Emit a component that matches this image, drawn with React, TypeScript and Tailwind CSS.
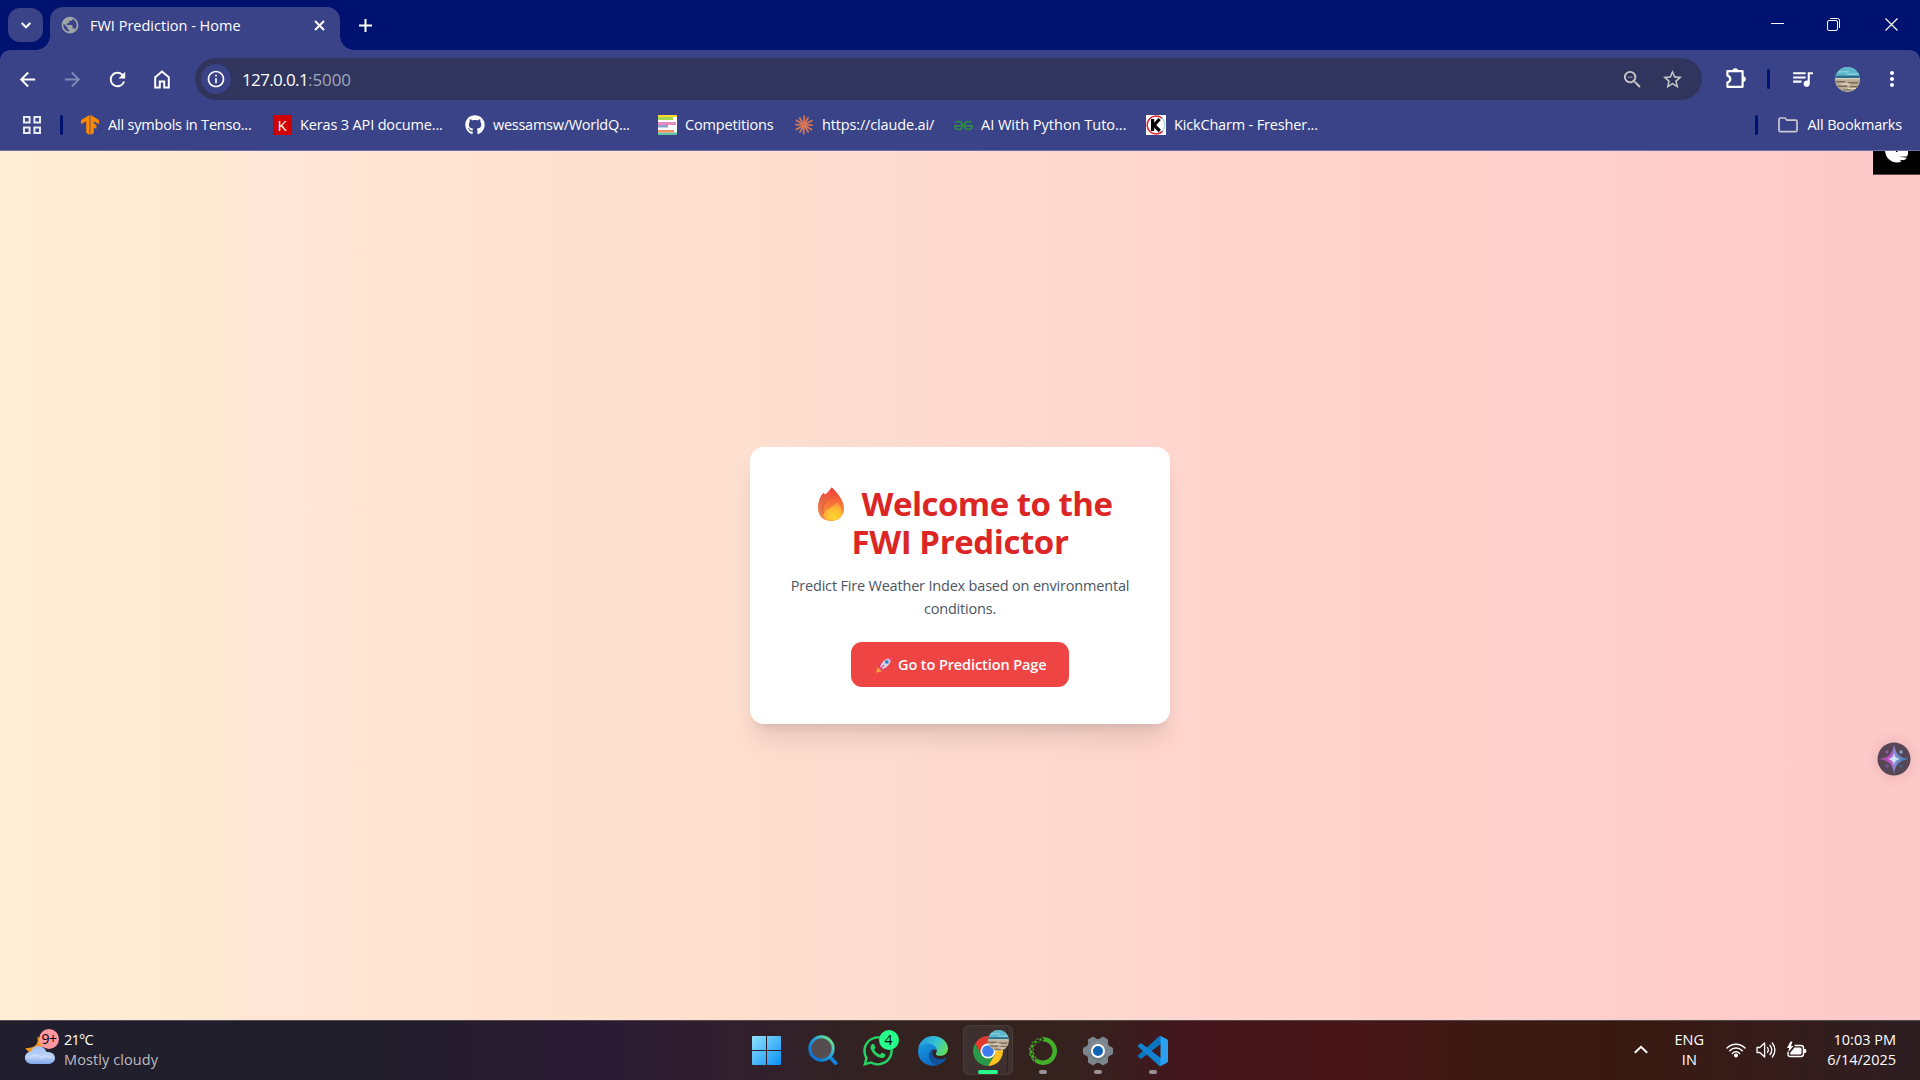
import React from 'react';
import type { ReactNode } from 'react';
import {
  MdArrowBack,
  MdArrowForward,
  MdInfoOutline,
  MdMoreVert,
  MdPublic,
  MdQueueMusic,
  MdRefresh,
  MdStarBorder,
  MdZoomOut,
} from 'react-icons/md';
import { FaGithub, FaWhatsapp } from 'react-icons/fa';
import { SiAnaconda, SiGeeksforgeeks, SiTensorflow } from 'react-icons/si';

/* ---------- browser icons ---------- */

function HomeIcon() {
  return (
    <svg width="16" height="19" viewBox="0 0 16 19" fill="none" stroke="#fff" strokeWidth="2">
      <path d="M1.2 7.2 8 1.6l6.8 5.6V17.6H10.2V11.6H5.8v6H1.2z" />
    </svg>
  );
}

function PuzzleIcon() {
  return (
    <svg width="22" height="22" viewBox="0 0 22 22" fill="none">
      <path
        d="M3.2 3.2H17.6V18.8H2.4V14.6C6.2 13.6 6.2 8.6 2.4 7.6V3.2z"
        stroke="#fff"
        strokeWidth="2.2"
        strokeLinejoin="round"
      />
      <path d="M7.6 3a2.7 2.4 0 0 1 5.4 0zM18 8.4a2.6 2.6 0 0 1 0 5.2z" fill="#fff" stroke="#fff" strokeWidth=".6" />
    </svg>
  );
}

function GridIcon() {
  return (
    <svg width="18" height="18" viewBox="0 0 18 18" fill="none" stroke="#e8eaf4" strokeWidth="2">
      <path d="M1 1h5.6v5.6H1zM11.4 1H17v5.6h-5.6zM1 11.4h5.6V17H1zM11.4 11.4H17V17h-5.6z" />
    </svg>
  );
}

function FolderIcon() {
  return (
    <svg width="20" height="16" viewBox="0 0 20 16" fill="none" stroke="#c9cad2" strokeWidth="1.7">
      <path d="M1 2.4Q1 1 2.4 1H7l2 2.2h8.6Q19 3.2 19 4.6v8.6q0 1.4-1.4 1.4H2.4Q1 14.6 1 13.2z" />
    </svg>
  );
}

function AvatarIcon({ size }: { size: number }) {
  return (
    <svg width={size} height={size} viewBox="0 0 25 25">
      <defs>
        <clipPath id={`avatar${size}`}>
          <circle cx="12.5" cy="12.5" r="12.5" />
        </clipPath>
      </defs>
      <g clipPath={`url(#avatar${size})`}>
        <rect width="25" height="25" fill="#b9ad97" />
        <rect width="25" height="9" fill="#5cb6cd" />
        <path d="M3 4h11v1.5H3zM12 6.5h12V8H12z" fill="#86cfde" />
        <rect y="8.6" width="25" height="3" fill="#2c6f8c" />
        <rect y="11" width="25" height="1.3" fill="#d9d0be" />
        <path d="M1 14h9v1.400H1zM13 15h10v1.400H13zM3 18.600h9V20H3zM15 19h7v1.200h-7zM8 22.400h8v1.200H8z" fill="#7d6952" />
        <path d="M6 16.500h9v1.200H6zM13 21h8v1H13z" fill="#e2dac9" />
      </g>
    </svg>
  );
}

/* ---------- bookmark icons ---------- */

function KerasIcon() {
  return (
    <div className="flex h-5 w-[19px] items-center justify-center bg-[#d00000] text-[15px] leading-none text-white">
      K
    </div>
  );
}

function CompetitionsIcon() {
  return (
    <svg width="19" height="20" viewBox="0 0 19 20">
      <rect width="19" height="20" fill="#fff" />
      <rect width="19" height="2" fill="#ffd92f" />
      <rect y="2" width="15" height="3" fill="#a6d854" />
      <rect y="7" width="18" height="3" fill="#e78ac3" />
      <rect y="10" width="10" height="2.5" fill="#8da0cb" />
      <rect y="15" width="16" height="2.5" fill="#fc8d62" />
      <rect y="17.5" width="19" height="2.5" fill="#66c2a5" />
    </svg>
  );
}

const rays = [0, 31, 58, 92, 120, 150, 182, 212, 238, 272, 300, 331];

function ClaudeIcon() {
  return (
    <svg width="20" height="20" viewBox="-10 -10 20 20" stroke="#d97757" strokeWidth="1.7">
      {rays.map((a, i) => (
        <path key={a} d={i % 2 ? 'M0 0H9.6' : 'M0 0H8.8'} transform={`rotate(${a})`} />
      ))}
    </svg>
  );
}

function KickIcon() {
  return (
    <svg width="20" height="20" viewBox="0 0 20 20" fill="none">
      <rect width="20" height="20" fill="#fff" />
      <path d="M15.5 3A9 9 0 0 1 16 16.5" stroke="#a9d3e6" strokeWidth="1.2" />
      <path d="M16 3.2A9 9 0 1 0 16.5 16.4" stroke="#e0202c" strokeWidth="1.5" />
      <path d="M6.6 4v12M13.6 4 8 10.2 13.8 16" stroke="#000" strokeWidth="3.2" />
    </svg>
  );
}

/* ---------- page artwork ---------- */

function FireIcon() {
  return (
    <svg width="26" height="34" viewBox="0 0 26 34">
      <defs>
        <linearGradient id="fireBody" x1=".6" y1="0" x2=".5" y2="1">
          <stop offset="0" stopColor="#ee3a3c" />
          <stop offset=".5" stopColor="#f8743b" />
          <stop offset="1" stopColor="#fb9a3c" />
        </linearGradient>
        <linearGradient id="fireSide" x1="0" y1="0" x2="0" y2="1">
          <stop offset="0" stopColor="#e5573c" />
          <stop offset="1" stopColor="#ee8e52" />
        </linearGradient>
        <radialGradient id="fireCore" cx=".55" cy=".8" r=".75">
          <stop offset="0" stopColor="#ffd72e" />
          <stop offset=".6" stopColor="#fdb833" />
          <stop offset="1" stopColor="#f98c38" />
        </radialGradient>
      </defs>
      <path
        d="M13.6.2C19 5.5 26 13 26 21.6 26 29 20.5 34 13.2 34 5.6 34 .2 29 .2 21.5.2 15 2 9 5.6 6c.6 1.2 1.2 1.5 2 1.2C9.5 5.5 12 3 13.6.2z"
        fill="url(#fireBody)"
      />
      <path d="M5.6 6C2 9 .2 15 .2 21.5c0 5.5 3 9.5 7 11.4C2.5 26 4 15.5 11.5 9.5L8.5 11c.8-2.2.4-3.4-.6-4.1-.9.5-1.7.3-2.3-.9z" fill="url(#fireSide)" />
      <path d="M13 9.5C7 14 3.5 20 5 27" fill="none" stroke="#d9503a" strokeWidth=".9" />
      <path d="M19 15c4 4 6 8.5 5 12.5C22.5 32 18 33.5 13.5 33.5 8.5 33.5 5.5 30.5 6 27c.8-5.5 9-6.5 13-12z" fill="url(#fireCore)" />
    </svg>
  );
}

function RocketIcon() {
  return (
    <svg width="16" height="16" viewBox="0 0 16 16">
      <path d="M1 11.5 4 10l2.5 2.5L5 14.5.3 15.7z" fill="#f9a13a" />
      <path d="M2.6 8.5 6 5.2l2 .6-4 5zM7.6 13.6 11 10l-.6-2-5 4z" fill="#e0316f" />
      <path d="M4 9.5C6 5 9 1.5 15.2.8 15 6.5 11.5 10 6.8 12.2z" fill="#d3d9ec" />
      <path d="M12 1.5 15.2.8 14.6 4z" fill="#ee3d6d" />
      <path d="M3.5 9.8 6.5 12.6 5 13.2 3 11z" fill="#c43472" />
      <circle cx="10.8" cy="4.9" r="1.9" fill="#3f7fd0" />
      <path d="M4.5 11.5 8 8" stroke="#f04d7d" strokeWidth="1.2" />
    </svg>
  );
}

function SparkleOrb() {
  return (
    <svg width="34" height="34" viewBox="-17 -17 34 34">
      <defs>
        <linearGradient id="orbLeft" x1="0" x2="1">
          <stop offset="0" stopColor="#94588f" />
          <stop offset=".35" stopColor="#c64fc4" />
          <stop offset=".55" stopColor="#7d8fd0" />
          <stop offset="1" stopColor="#3b78b0" />
        </linearGradient>
      </defs>
      <circle r="16.5" fill="#574656" />
      <path d="M0-15C1.5-5 5-1.500 15 0 5 1.500 1.500 5 0 15-1.500 5-5 1.500-15 0-5-1.500-1.500-5 0-15z" fill="url(#orbLeft)" />
      <path d="M0-6C1-2 2-1 6 0 2 1 1 2 0 6-1 2-2 1-6 0-2-1-1-2 0-6z" fill="#cfe4fa" />
      <g strokeWidth="1.2">
        <path d="M-7-9v4M-9-7h4" stroke="#a05cb4" />
        <path d="M7-9v4M5-7h4" stroke="#8fb4de" />
        <path d="M-7 5v4M-9 7h4" stroke="#7a55a0" />
        <path d="M7 5v4M5 7h4" stroke="#3d6396" />
      </g>
    </svg>
  );
}

/* ---------- taskbar icons ---------- */

function WeatherIcon() {
  return (
    <svg width="30" height="30" viewBox="0 0 30 30">
      <defs>
        <linearGradient id="cloud" x1="0" y1="0" x2="0" y2="1">
          <stop offset="0" stopColor="#9fc0f7" />
          <stop offset=".6" stopColor="#bdd2f6" />
          <stop offset="1" stopColor="#7ea5ea" />
        </linearGradient>
      </defs>
      <path d="M12 1.5c3 6-2 12.5-11.5 11.5C3 18.5 11 20 16 15.5 20 11 18 4 12 1.5z" fill="#f29a1f" />
      <path d="M7.5 29C3 29 0 26.3 0 22.7c0-3.4 2.5-6 6-6.2C7.2 13.2 10 11.3 13.5 11.3c4 0 7 2.3 8 5.7 5-.3 8.5 2 8.5 6 0 3.6-3 6-7 6z" fill="url(#cloud)" />
      <path d="M5 22c4-3 9-2 11 1 3-3 8-3 11 0" fill="none" stroke="#d7e4fb" strokeWidth="2" opacity=".5" />
    </svg>
  );
}

function WindowsIcon() {
  return (
    <svg width="29" height="29" viewBox="0 0 29 29">
      <defs>
        <linearGradient id="win" x1="0" y1="0" x2="1" y2="1">
          <stop offset="0" stopColor="#8fe3ff" />
          <stop offset="1" stopColor="#0a8ff5" />
        </linearGradient>
      </defs>
      <path d="M1 0h13v14H0V1q0-1 1-1zM15 0h13q1 0 1 1v13H15zM0 15h14v14H1q-1 0-1-1zM15 15h14v13q0 1-1 1H15z" fill="url(#win)" />
    </svg>
  );
}

function SearchIcon() {
  return (
    <svg width="30" height="31" viewBox="0 0 30 31" fill="none">
      <defs>
        <linearGradient id="lens" x1=".2" y1=".8" x2=".9" y2=".1">
          <stop offset="0" stopColor="#0d76d6" />
          <stop offset=".55" stopColor="#2ba3d8" />
          <stop offset="1" stopColor="#6be88e" />
        </linearGradient>
      </defs>
      <path d="m21 21 6.5 7" stroke="#1283e0" strokeWidth="4" strokeLinecap="round" />
      <circle cx="13.5" cy="13.5" r="11.7" fill="#564d50" stroke="url(#lens)" strokeWidth="3" />
    </svg>
  );
}

function EdgeIcon() {
  return (
    <svg width="30" height="30" viewBox="0 0 30 30">
      <defs>
        <linearGradient id="edgeTop" x1="0" y1=".3" x2="1" y2=".7">
          <stop offset="0" stopColor="#279bdc" />
          <stop offset=".5" stopColor="#34c1d8" />
          <stop offset="1" stopColor="#66e052" />
        </linearGradient>
        <linearGradient id="edgeBody" x1="0" y1="0" x2=".6" y2="1">
          <stop offset="0" stopColor="#1b9de2" />
          <stop offset="1" stopColor="#0b68c4" />
        </linearGradient>
      </defs>
      <path d="M.3 12.5C1.3 5.5 7.3 0 15 0c8.5 0 15 6 15 12.5 0 4.5-3.3 7.3-7.5 7.3-3 0-5.2-1-4.5-2.4 1.5-2 1.3-5.400-3.500-7.400C9 8 3 9 .3 12.500z" fill="url(#edgeTop)" />
      <path d="M0 15c.5-5 5-7.500 9.500-7.500 5.500 0 9 3 9.300 6.700-3.800-2.200-7.800.8-7.800 5.300 0 5 5 9.500 9.500 9.300C13 31.500 0 28 0 15z" fill="url(#edgeBody)" />
      <path d="M11.800 16.500C9.500 22.500 14 30 20.500 28.800c3.500-1 6.500-3.500 7.800-6.300.2-.5-.3-.7-.7-.5-5.600 2.700-13.600.5-13.200-5.200.1-1 .6-1.800 1.300-2.400-1.600-.2-3.100.6-3.900 2.100z" fill="#12529c" />
    </svg>
  );
}

function ChromeIcon() {
  return (
    <svg width="30" height="30" viewBox="-22 -22 44 44">
      <path d="M0-11H19.050A22 22 0 0 0-19.050-11L-9.530 5.500z" fill="#e33b2e" />
      <path d="M0-11H19.050A22 22 0 0 1 0 22L9.530 5.500z" fill="#fcc31e" />
      <path d="M-19.050-11A22 22 0 0 0 0 22L9.530 5.500H-9.530z" fill="#2a9a48" />
      <circle r="11" fill="#fff" />
      <circle r="8.6" fill="#3b7ded" />
    </svg>
  );
}

function SettingsIcon() {
  return (
    <svg width="30" height="30" viewBox="-15 -15 30 30">
      <defs>
        <linearGradient id="gear" x1="0" y1="0" x2="0" y2="1">
          <stop offset="0" stopColor="#8d949b" />
          <stop offset="1" stopColor="#68727c" />
        </linearGradient>
      </defs>
      <circle r="12" fill="url(#gear)" />
      {[0, 60, 120, 180, 240, 300].map((a) => (
        <path key={a} d="M9-6 14.3-3.4Q15-3 15-2V2Q15 3 14.3 3.4L9 6z" fill="#7c858d" transform={`rotate(${a})`} />
      ))}
      <circle r="6" fill="#0f63b5" stroke="#fff" strokeWidth="2" />
    </svg>
  );
}

function VsCodeIcon() {
  return (
    <svg width="30" height="30" viewBox="0 0 100 100">
      <path d="M96.5 10.8 75.9.9a6.2 6.2 0 0 0-7.1 1.2L1.3 63.6a4.2 4.2 0 0 0 0 6.2l5.500 5a4.200 4.200 0 0 0 5.300.2L93.400 13.400z" fill="#0a74c0" />
      <path d="M96.500 89.200 75.900 99.100a6.200 6.200 0 0 1-7.100-1.200L1.300 36.400a4.200 4.200 0 0 1 0-6.200l5.500-5a4.200 4.200 0 0 1 5.300-.2L93.400 86.600z" fill="#1283d2" />
      <path d="M75.900 99.100a6.200 6.200 0 0 1-7.100-1.200c2.300 2.300 6.200.7 6.200-2.600V4.700c0-3.300-3.900-4.900-6.200-2.600a6.200 6.200 0 0 1 7.100-1.200l20.600 9.900A6.300 6.300 0 0 1 100 16.400v67.200a6.300 6.300 0 0 1-3.500 5.600z" fill="#2ba0f0" />
    </svg>
  );
}

function WifiIcon() {
  return (
    <svg width="20" height="16" viewBox="0 0 20 16" fill="none" stroke="#fff" strokeWidth="1.5" strokeLinecap="round">
      <path d="M1 6a12.500 12.500 0 0 1 18 0M3.700 8.800a8.700 8.700 0 0 1 12.600 0M6.400 11.400a5 5 0 0 1 7.200 0" />
      <circle cx="10" cy="13.5" r="1.3" fill="#fff" />
    </svg>
  );
}

function SpeakerIcon() {
  return (
    <svg width="20" height="18" viewBox="0 0 20 18" fill="none" stroke="#fff" strokeWidth="1.3" strokeLinecap="round" strokeLinejoin="round">
      <path d="M1 6.500h2.800L8.600 2v14l-4.800-4.500H1zM11.500 6.500q1.600 2.500 0 5M14 4.300q3.400 4.700 0 9.400M16.300 2q5.200 7 0 14" />
    </svg>
  );
}

function BatteryIcon() {
  return (
    <svg width="21" height="18" viewBox="0 0 21 18" fill="none">
      <path d="M8.500 4.500H15q2.500 0 2.500 2.500v6q0 2.500-2.500 2.500H4.500Q2 15.500 2 13v-2" stroke="#fff" strokeWidth="1.4" />
      <path d="M8.500 6.500H14q1.500 0 1.500 1.500v4q0 1.500-1.500 1.500H4.500L4 12z" fill="#fff" />
      <path d="M18 8h1q1.300 0 1.300 1v2q0 1-1.300 1h-1z" fill="#fff" />
      <path d="M4.500.5 1 7h2.300L2 11.500 7.500 5H5L6.500.5z" fill="#fff" />
    </svg>
  );
}

/* ---------- browser chrome ---------- */

function TabStrip() {
  return (
    <div className="flex h-[50px] items-start bg-[#001270]">
      <div className="mt-2 ml-2 flex h-[34px] w-[35px] items-center justify-center rounded-xl bg-[#3a4387]">
        <svg width="10" height="7" viewBox="0 0 10 7" fill="none" stroke="#fff" strokeWidth="2">
          <path d="m.7 1 4.300 4.300L9.300 1" />
        </svg>
      </div>
      <div className="relative mt-[7px] ml-[7px] flex h-[43px] w-[290px] items-center rounded-t-[13px] bg-[#3a4387] pb-[7px] pl-[10px]">
        <div className="absolute bottom-0 -left-[14px] h-[14px] w-[14px] bg-[radial-gradient(circle_at_0_0,transparent_13.500px,#3a4387_14px)]" />
        <div className="absolute -right-[14px] bottom-0 h-[14px] w-[14px] bg-[radial-gradient(circle_at_100%_0,transparent_13.500px,#3a4387_14px)]" />
        <MdPublic size={20} color="#a0a6a8" />
        <span className="mt-[2px] ml-[10px] text-[14.5px] whitespace-nowrap text-white">FWI Prediction - Home</span>
        <svg className="mr-[15px] ml-auto" width="11" height="11" viewBox="0 0 11 11" stroke="#fff" strokeWidth="1.9">
          <path d="m1 1 9 9M10 1 1 10" />
        </svg>
      </div>
      <svg className="mt-[19px] ml-[19px]" width="13" height="13" viewBox="0 0 13 13" stroke="#fff" strokeWidth="2">
        <path d="M0 6.500h13M6.500 0v13" />
      </svg>
      <div className="mr-[22px] ml-auto flex items-center">
        <svg className="mt-px" width="13" height="47" viewBox="0 0 13 47" stroke="#fff">
          <path d="M0 22.500h13" />
        </svg>
        <svg className="ml-[43px] mt-px" width="13" height="13" viewBox="0 0 13 13" fill="none" stroke="#fff">
          <path d="M.5 4q0-1.500 1.500-1.500h7q1.500 0 1.500 1.500v7q0 1.500-1.500 1.500H2Q.5 12.500.5 11z" />
          <path d="M3 .5h7.500q2 0 2 2V10" />
        </svg>
        <svg className="mt-px ml-[45px]" width="13" height="13" viewBox="0 0 13 13" stroke="#fff" strokeWidth="1.2">
          <path d="m.5.5 12 12M12.500.5l-12 12" />
        </svg>
      </div>
    </div>
  );
}

function Toolbar() {
  return (
    <div className="bg-[#001270]">
      <div className="flex h-[58px] items-center rounded-t-[10px] bg-[#3a4387] text-white">
        <MdArrowBack className="ml-4" size={23} />
        <MdArrowForward className="ml-[22px] text-[#8188b8]" size={23} />
        <MdRefresh className="ml-[22px]" size={23} />
        <div className="ml-[25px]">
          <HomeIcon />
        </div>
        <div className="ml-[25px] flex h-[42px] w-[1507px] items-center rounded-full bg-[#30355e] pl-[6px]">
          <div className="flex h-[30px] w-[30px] items-center justify-center rounded-full bg-[#3a4387]">
            <MdInfoOutline size={20} />
          </div>
          <div className="mt-px ml-[11px] flex text-[17px] whitespace-nowrap">
            <span className="tracking-[-0.63px]">127.0.0.1</span>
            <span className="tracking-[-0.1px] text-[#a3a5b8]">:5000</span>
          </div>
          <MdZoomOut className="mr-[17px] ml-auto text-[#c7c7c7]" size={23} />
          <MdStarBorder className="mr-[18px] text-[#c7c7c7]" size={23} />
        </div>
        <div className="ml-[23px]">
          <PuzzleIcon />
        </div>
        <div className="ml-5 h-5 w-[3px] rounded-full bg-[#001270]" />
        <MdQueueMusic className="mb-[2px] ml-5" size={25} />
        <div className="ml-5">
          <AvatarIcon size={25} />
        </div>
        <MdMoreVert className="ml-5" size={24} />
      </div>
    </div>
  );
}

function Bookmark({ icon, label, className }: { icon: ReactNode; label: string; className: string }) {
  return (
    <div className={`flex shrink-0 items-center whitespace-nowrap ${className}`}>
      <div className="mr-2 flex w-5 justify-center">{icon}</div>
      {label}
    </div>
  );
}

function BookmarksBar() {
  return (
    <div className="flex h-[43px] items-center border-b border-[#6a70ab] bg-[#3a4387] pb-[8px] text-[14.5px] text-white">
      <div className="ml-[23px]">
        <GridIcon />
      </div>
      <div className="ml-[19px] h-5 w-[3px] rounded-full bg-[#001270]" />
      <Bookmark className="ml-[17px] w-[192px] tracking-[-0.2px]" icon={<SiTensorflow size={20} color="#ff8a00" />} label="All symbols in Tenso..." />
      <Bookmark className="w-[193px] tracking-[-0.15px]" icon={<KerasIcon />} label="Keras 3 API docume..." />
      <Bookmark className="w-[192px] tracking-[-0.27px]" icon={<FaGithub size={20} />} label="wessamsw/WorldQ..." />
      <Bookmark className="w-[137px] tracking-[-0.17px]" icon={<CompetitionsIcon />} label="Competitions" />
      <Bookmark className="w-[159px] tracking-[-0.15px]" icon={<ClaudeIcon />} label="https://claude.ai/" />
      <Bookmark className="w-[193px]" icon={<SiGeeksforgeeks size={19} color="#2f8d46" />} label="AI With Python Tuto..." />
      <Bookmark className="tracking-[-0.17px]" icon={<KickIcon />} label="KickCharm - Fresher..." />
      <div className="ml-auto h-5 w-[3px] rounded-full bg-[#001270]" />
      <div className="mr-[18px] ml-5 flex items-center gap-[10px] tracking-[-0.17px]">
        <FolderIcon />
        All Bookmarks
      </div>
    </div>
  );
}

/* ---------- page ---------- */

function Page() {
  return (
    <main className="relative flex h-[869px] items-start justify-center bg-[linear-gradient(90deg,#ffedd5_0%,#feead2_11%,#ffe6d6_13%,#ffe0cf_35%,#fedacf_50%,#fed3cc_70%,#fecdca_88%,#fec9c9_100%)]">
      <section className="mt-[296px] flex h-[277px] w-[420px] flex-col items-center rounded-[14px] bg-white pt-[38px] shadow-[0_20px_25px_-5px_rgba(0,0,0,0.1),0_8px_10px_-6px_rgba(0,0,0,0.1)]">
        <h1 className="text-center text-[33px] leading-[38px] font-bold text-[#dc2626]">
          <span className="flex items-center whitespace-nowrap">
            <span className="mr-[18px] ml-[10px]">
              <FireIcon />
            </span>
            <span className="tracking-[-0.52px]">Welcome to the</span>
          </span>
          <span className="block tracking-[-0.42px]">FWI Predictor</span>
        </h1>
        <p className="mt-[13px] text-center text-[14.5px] leading-[23px] tracking-[-0.19px] whitespace-nowrap text-[#4b5563]">
          Predict Fire Weather Index based on environmental
          <br />
          conditions.
        </p>
        <a className="mt-[22px] flex h-[45px] w-[218px] items-center rounded-[11px] bg-[#ef4444] pl-[25px] text-[14.5px] font-semibold tracking-[-0.1px] whitespace-nowrap text-white">
          <RocketIcon />
          <span className="ml-[6px]">Go to Prediction Page</span>
        </a>
      </section>

      <div className="absolute top-0 right-0 h-6 w-[47px] overflow-hidden border-b border-[#5c4a4a] bg-black">
        <svg className="ml-3" width="24" height="12" viewBox="0 0 24 12">
          <path d="M0 0h23v3l-1 2.500-8 .3 8 .9-2 2-2.500.5-3-.5 2 1.800C10 13.500 1 9.500 0 0z" fill="#fff" />
          <path d="M11 0h1.500v1H11z" fill="#000" />
        </svg>
      </div>

      <div className="absolute top-[591px] right-[9px] rounded-full shadow-[0_0_14px_rgba(120,60,80,0.18)]">
        <SparkleOrb />
      </div>
    </main>
  );
}

/* ---------- taskbar ---------- */

function TaskItem({ children, marker }: { children: ReactNode; marker?: 'idle' | 'active' }) {
  return (
    <div className="relative flex h-full w-[55px] items-center justify-center">
      {marker === 'active' && (
        <>
          <div className="absolute top-1 left-[3px] h-[50px] w-[50px] rounded-md border border-[#4a3d3a] bg-[#3d302e]" />
          <div className="absolute top-1 left-[3px] h-[50px] w-[45px] rounded-md border-r border-[#2e2220]" />
        </>
      )}
      <div className="relative">{children}</div>
      {marker === 'idle' && <div className="absolute bottom-[6px] left-[24px] h-1 w-2 rounded-full bg-[#9c9196]" />}
      {marker === 'active' && <div className="absolute bottom-[6px] left-[18px] h-1 w-5 rounded-full bg-[#26ff8a]" />}
    </div>
  );
}

function Taskbar() {
  return (
    <footer className="flex h-[60px] items-center border-t border-[#544d50] bg-[linear-gradient(90deg,#211f2d_0%,#211e2c_20%,#2b1b33_31%,#31202c_39%,#33221f_46%,#35221f_56%,#45141c_63%,#471516_71%,#3c1913_77%,#39190f_84%,#361c19_91%,#301d1f_97%,#2d1e22_100%)] text-[14.5px] text-white">
      <div className="flex w-[739px] items-center pb-[2px] pl-[25px]">
        <div className="relative">
          <WeatherIcon />
          <div className="absolute -top-[6px] left-[14px] flex h-5 w-5 items-center justify-center rounded-full bg-[#ff98a0] text-[14px] tracking-[-0.5px] text-black">
            9+
          </div>
        </div>
        <div className="ml-[9px] leading-5 whitespace-nowrap">
          <div className="tracking-[-0.8px]">21°C</div>
          <div className="tracking-[0.1px] text-[#bdbbc1]">Mostly cloudy</div>
        </div>
      </div>
      <div className="flex h-full gap-px">
        <TaskItem>
          <WindowsIcon />
        </TaskItem>
        <div className="flex h-full">
          <TaskItem>
            <SearchIcon />
          </TaskItem>
          <TaskItem>
            <FaWhatsapp size={34} color="#25d366" />
            <div className="absolute -top-[4px] left-[18px] flex h-5 w-5 items-center justify-center rounded-full bg-[#26ff8a] text-[14px] text-black">
              4
            </div>
          </TaskItem>
          <TaskItem>
            <EdgeIcon />
          </TaskItem>
          <TaskItem marker="active">
            <ChromeIcon />
            <div className="absolute -top-[6px] left-[15px]">
              <AvatarIcon size={21} />
            </div>
          </TaskItem>
          <TaskItem marker="idle">
            <SiAnaconda size={28} color="#43b02a" />
          </TaskItem>
          <TaskItem marker="idle">
            <SettingsIcon />
          </TaskItem>
          <TaskItem marker="idle">
            <VsCodeIcon />
          </TaskItem>
        </div>
      </div>
      <div className="mr-6 ml-auto flex items-center pb-[2px] whitespace-nowrap">
        <svg width="14" height="9" viewBox="0 0 14 9" fill="none" stroke="#fff" strokeWidth="1.9">
          <path d="m.8 7.800 6.200-6 6.200 6" />
        </svg>
        <div className="ml-[26px] w-[30px] text-center leading-5">
          ENG
          <br />
          IN
        </div>
        <div className="ml-[22px] flex items-center gap-[10px]">
          <WifiIcon />
          <SpeakerIcon />
          <BatteryIcon />
        </div>
        <div className="ml-5 text-right leading-5">
          10:03 PM
          <br />
          6/14/2025
        </div>
      </div>
    </footer>
  );
}

export default function App() {
  return (
    <div className="flex h-[1080px] w-[1920px] flex-col overflow-hidden font-['Open_Sans','Noto_Sans',sans-serif]">
      <TabStrip />
      <Toolbar />
      <BookmarksBar />
      <Page />
      <Taskbar />
    </div>
  );
}
